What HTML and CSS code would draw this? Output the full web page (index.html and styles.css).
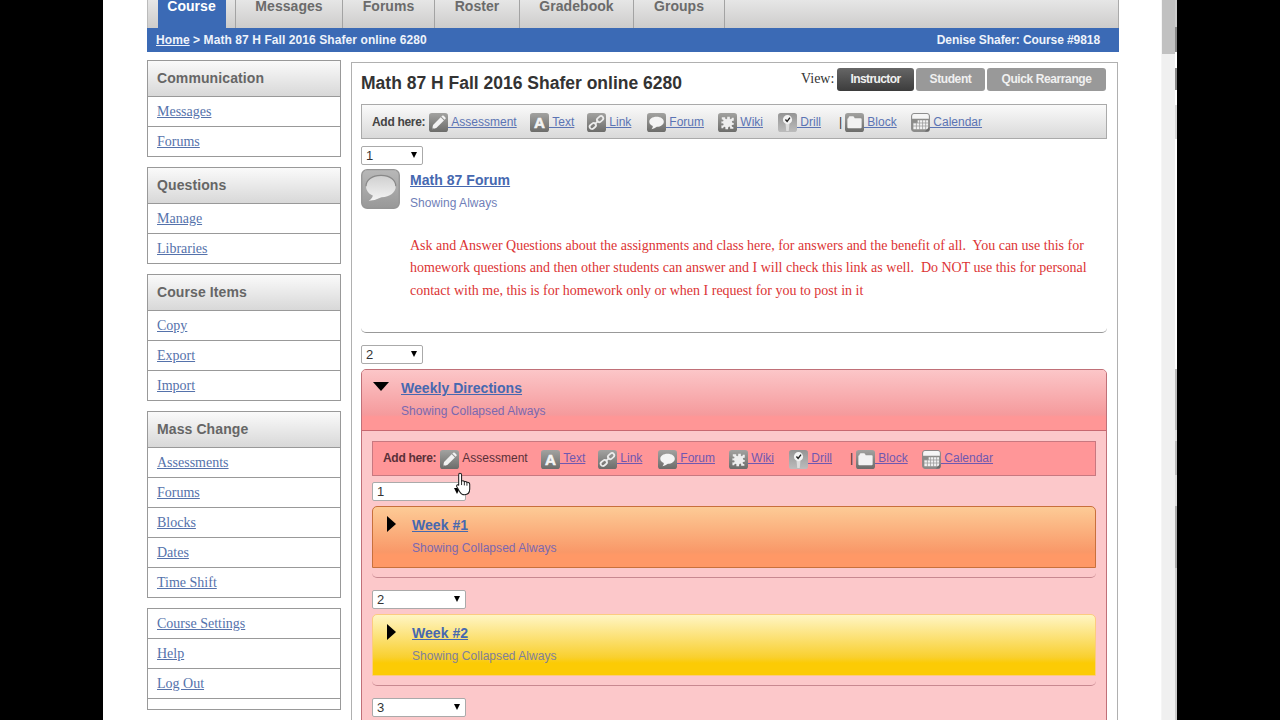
FILE: index.html
```html
<!DOCTYPE html>
<html lang="en">

<head>
    <meta charset="UTF-8">
    <title>Math 87 H Fall 2016 Shafer online 6280</title>
    <link rel="stylesheet" href="styles.css">
</head>

<body>

<svg class="sprite" width="0" height="0">
    <defs>
        <linearGradient id="grey" x1="0" y1="0" x2="0" y2="1">
            <stop offset="0" stop-color="#a2a2a0"/>
            <stop offset="1" stop-color="#6c6c6a"/>
        </linearGradient>
        <linearGradient id="pale" x1="0" y1="0" x2="0" y2="1">
            <stop offset="0" stop-color="#949494"/>
            <stop offset="1" stop-color="#bcbcbc"/>
        </linearGradient>
    </defs>
    <symbol id="i-assess" viewBox="0 0 20 20">
        <rect width="20" height="20" rx="3" fill="url(#grey)"/>
        <path d="M3.200 17l1.100-4.500 8-8 3.400 3.400-8 8z" fill="#f2f2f2"/>
        <path d="M13 3.800l.9-.9q.8-.7 1.600 0l1.800 1.800q.7.800 0 1.600l-.9.900z" fill="#f2f2f2"/>
        <path d="M3.200 17l.5-2 1.500 1.500z" fill="#888"/>
    </symbol>
    <symbol id="i-link" viewBox="0 0 20 20">
        <rect width="20" height="20" rx="3" fill="url(#grey)"/>
        <g fill="none" stroke="#ececec" stroke-width="1.800">
            <rect x="10.200" y="4" width="7.200" height="4.800" rx="2.400" transform="rotate(-40 13.800 6.400)"/>
            <rect x="2.500" y="11.300" width="7.200" height="4.800" rx="2.400" transform="rotate(-40 6.100 13.700)"/>
            <path d="M8 12l4-4"/>
        </g>
    </symbol>
    <symbol id="i-forum" viewBox="0 0 20 20">
        <rect width="20" height="20" rx="3" fill="url(#grey)"/>
        <path d="M10 4c4.700 0 7.700 2.300 7.700 5.300S14.500 14.600 10.400 14.600Q8 16.800 4.800 17q1.500-1.500 1.300-3.200C3.900 13 2.400 11.400 2.400 9.300 2.400 6.300 5.500 4 10 4z" fill="#f4f4f4"/>
    </symbol>
    <symbol id="i-wiki" viewBox="0 0 20 20">
        <rect width="20" height="20" rx="3" fill="url(#grey)"/>
        <path d="M4 4.500h3.500q-.3 2 1.200 2t1-2.500h2.800q-.5 2.500.8 2.500t1.300-1.500h2v3.200q-2-.4-2 1t2 1.300v1.800q-2.300-.2-2.300 1.200t1.900 1.500v1.500h-3.400q.4-2.200-1-2.200T10.500 17H7.800q.4-2.400-.9-2.400T5.500 16H3.600v-3q2.300.4 2.300-1t-2.300-1V8.800q2.200.3 2.200-.9T4 6.900z" fill="#eee"/>
    </symbol>
    <symbol id="i-drill" viewBox="0 0 20 20">
        <rect width="20" height="20" rx="3" fill="url(#pale)"/>
        <path d="M7.900 11h4.200l-.8 8h-2.600z" fill="#dcdcdc"/>
        <circle cx="10" cy="7" r="4.800" fill="#f4f4f4"/>
        <path d="M7.800 6.800l1.800 2 3-4" fill="none" stroke="#222" stroke-width="1.500"/>
    </symbol>
    <symbol id="i-block" viewBox="0 0 20 20">
        <rect width="20" height="20" rx="3" fill="url(#grey)"/>
        <path d="M2.500 6.500q0-1 1-1l.6-1.500q.2-.5.8-.5h3.600q.6 0 .9.500l.8 1.500h6.300q1 0 1 1v8.500q0 1-1 1h-13q-1 0-1-1z" fill="#f2f2f2"/>
    </symbol>
    <symbol id="i-cal" viewBox="0 0 20 20">
        <rect x=".6" y=".6" width="18.800" height="18.800" rx="2.500" fill="#8c8c8a" stroke="#888" stroke-width="1"/>
        <path d="M1.200 6V3q0-1.900 1.900-1.900h13.800q1.900 0 1.900 1.900v3z" fill="#f6f6f6"/>
        <path d="M7 7.500h11V17H2.500V10.500H7z" fill="#f2f2f2"/>
        <path d="M2 10.500h16M2 13.700h16M5.700 10v8M9 7v11M12.200 7v11M15.400 7v11" stroke="#999" stroke-width=".8"/>
        <path d="M14.500 19.500l5-5v3q0 2-2 2z" fill="#6d6d6d"/>
    </symbol>
</svg>

<div class="window">
    <div class="page">

        <ul class="tabs">
            <li class="tab-course"><a class="current">Course</a></li>
            <li class="tab-messages"><a>Messages</a></li>
            <li class="tab-forums"><a>Forums</a></li>
            <li class="tab-roster"><a>Roster</a></li>
            <li class="tab-gradebook"><a>Gradebook</a></li>
            <li class="tab-groups"><a>Groups</a></li>
        </ul>

        <div class="breadcrumb">
            <span><u>Home</u> &gt; Math 87 H Fall 2016 Shafer online 6280</span>
            <span class="who">Denise Shafer: Course #9818</span>
        </div>

        <div class="columns">
            <aside>
                <div class="box">
                    <h3>Communication</h3>
                    <p><a>Messages</a></p>
                    <p><a>Forums</a></p>
                </div>
                <div class="box">
                    <h3>Questions</h3>
                    <p><a>Manage</a></p>
                    <p><a>Libraries</a></p>
                </div>
                <div class="box">
                    <h3>Course Items</h3>
                    <p><a>Copy</a></p>
                    <p><a>Export</a></p>
                    <p><a>Import</a></p>
                </div>
                <div class="box">
                    <h3>Mass Change</h3>
                    <p><a>Assessments</a></p>
                    <p><a>Forums</a></p>
                    <p><a>Blocks</a></p>
                    <p><a>Dates</a></p>
                    <p><a>Time Shift</a></p>
                </div>
                <div class="box">
                    <p><a>Course Settings</a></p>
                    <p><a>Help</a></p>
                    <p><a>Log Out</a></p>
                    <p class="empty"></p>
                </div>
            </aside>

            <main>
                <div class="heading">
                    <h2>Math 87 H Fall 2016 Shafer online 6280</h2>
                    <div class="view">
                        <span class="label">View:</span>
                        <span class="btn on btn-instructor">Instructor</span>
                        <span class="btn btn-student">Student</span>
                        <span class="btn btn-rearrange">Quick Rearrange</span>
                    </div>
                </div>

                <div class="addbar">
                    <b>Add here:</b>
                    <a><svg><use href="#i-assess"/></svg><span>&nbsp;Assessment</span></a>
                    <a><svg viewBox="0 0 20 20"><rect width="20" height="20" rx="3" fill="url(#grey)"/><text x="10" y="15.500" text-anchor="middle" class="letter">A</text></svg><span>&nbsp;Text</span></a>
                    <a><svg><use href="#i-link"/></svg><span>&nbsp;Link</span></a>
                    <a><svg><use href="#i-forum"/></svg><span>&nbsp;Forum</span></a>
                    <a><svg><use href="#i-wiki"/></svg><span>&nbsp;Wiki</span></a>
                    <a><svg><use href="#i-drill"/></svg><span>&nbsp;Drill</span></a>
                    <i>|</i>
                    <a><svg><use href="#i-block"/></svg><span>&nbsp;Block</span></a>
                    <a><svg><use href="#i-cal"/></svg><span>&nbsp;Calendar</span></a>
                </div>

                <div class="select">1</div>

                <div class="item">
                    <svg class="forum-icon" viewBox="0 0 39 40">
                        <defs>
                            <linearGradient id="tile" x1="0" y1="0" x2="0" y2="1">
                                <stop offset="0" stop-color="#b8b8b8"/>
                                <stop offset="1" stop-color="#989898"/>
                            </linearGradient>
                            <linearGradient id="bubble" x1="0" y1="0" x2="0" y2="1">
                                <stop offset="0" stop-color="#cfcfcf"/>
                                <stop offset="1" stop-color="#f4f4f4"/>
                            </linearGradient>
                        </defs>
                        <rect x=".7" y=".7" width="37.600" height="38.600" rx="5.500" fill="url(#tile)" stroke="#959595" stroke-width="1.300"/>
                        <path d="M20 6.500c9 0 14.800 4.700 14.800 10.700S29 28 20.500 28.200Q15 31.200 7.500 31.800q4-2.200 4.300-5.300C7.700 24.700 5 21.500 5 17.200 5 11.200 11 6.500 20 6.500z" fill="url(#bubble)"/>
                        <path d="M5 17.200C5 11 11 6.300 20 6.300s14.800 4.700 14.800 10.900" fill="none" stroke="#888" stroke-width="1.200"/>
                    </svg>
                    <div>
                        <a class="title">Math 87 Forum</a>
                        <p class="status">Showing Always</p>
                        <div class="summary">
                            <p>Ask and Answer Questions about the assignments and class here, for answers and the benefit of all.&nbsp; You can use this for</p>
                            <p>homework questions and then other students can answer and I will check this link as well.&nbsp; Do NOT use this for personal</p>
                            <p>contact with me, this is for homework only or when I request for you to post in it</p>
                        </div>
                    </div>
                </div>

                <div class="select second">2</div>

                <div class="weekly">
                    <div class="block-head">
                        <span class="arrow down"></span>
                        <a class="title">Weekly Directions</a>
                        <p class="status">Showing Collapsed Always</p>
                    </div>
                    <div class="block-body">
                        <div class="addbar">
                            <b>Add here:</b>
                            <a class="hover"><svg><use href="#i-assess"/></svg><span>&nbsp;Assessment</span></a>
                            <a><svg viewBox="0 0 20 20"><rect width="20" height="20" rx="3" fill="url(#grey)"/><text x="10" y="15.500" text-anchor="middle" class="letter">A</text></svg><span>&nbsp;Text</span></a>
                            <a><svg><use href="#i-link"/></svg><span>&nbsp;Link</span></a>
                            <a><svg><use href="#i-forum"/></svg><span>&nbsp;Forum</span></a>
                            <a><svg><use href="#i-wiki"/></svg><span>&nbsp;Wiki</span></a>
                            <a><svg><use href="#i-drill"/></svg><span>&nbsp;Drill</span></a>
                            <i>|</i>
                            <a><svg><use href="#i-block"/></svg><span>&nbsp;Block</span></a>
                            <a><svg><use href="#i-cal"/></svg><span>&nbsp;Calendar</span></a>
                        </div>

                        <div class="select wide">1
                            <svg class="pointer" viewBox="0 0 14 22">
                                <path d="M3.600 1q1.600 0 1.600 1.700v5.600q1.700-.9 2.600.5 1.700-.6 2.400.7 2.600-.4 2.600 2v4.200q0 5.300-4.800 5.300-3 0-4.400-2.600L.9 13.800q-.8-1.600.5-2 .7-.2 1.100.6V2.700Q2.500 1 3.600 1z" fill="#fff" stroke="#222" stroke-width="1"/>
                                <path d="M5.200 8v4M7.800 9v3.300M10.200 9.600v3" stroke="#222" stroke-width=".9"/>
                            </svg>
                        </div>
                        <div class="week orange">
                            <span class="arrow right"></span>
                            <a class="title">Week #1</a>
                            <p class="status">Showing Collapsed Always</p>
                        </div>
                        <div class="week-end"></div>

                        <div class="select wide">2</div>
                        <div class="week yellow">
                            <span class="arrow right"></span>
                            <a class="title">Week #2</a>
                            <p class="status">Showing Collapsed Always</p>
                        </div>
                        <div class="week-end"></div>

                        <div class="select wide">3</div>
                    </div>
                </div>
            </main>
        </div>
    </div>

    <div class="scrollbar"><div class="thumb"></div></div>
    <div class="edge"></div>
</div>

</body>
</html>
```
FILE: styles.css
```css
* {
    box-sizing: border-box;
}

body {
    margin: 0;
    height: 720px;
    overflow: hidden;
    background-color: #000;
    font-family: "Liberation Sans", Arial, sans-serif;
    font-size: 12px;
    color: #333;
}

h2, h3, p, ul {
    margin: 0;
    padding: 0;
}

.sprite {
    display: block;
}

.letter {
    font: bold 16px "Liberation Sans", Arial, sans-serif;
    fill: #f4f4f4;
    stroke: #f4f4f4;
    stroke-width: .6px;
}

.window {
    display: flex;
    width: 1074px;
    height: 720px;
    margin-left: 103px;
    background-color: #fff;
    overflow: hidden;
}

.page {
    width: 972px;
    margin-left: 44px;
    margin-right: 42px;
    flex: none;
}

.scrollbar {
    width: 14px;
    background-color: #f0f0f0;
    border-left: 1px solid #f5f5f5;
}

.thumb {
    height: 54px;
    background-color: #c1c1c1;
}

.edge {
    width: 2px;
    background: linear-gradient(#ccc 0 27px, #888 27px 52px, #fff 52px 68px, #888 68px 90px, #fff 90px 105px, #d8d8d8 105px 139px, #fff 139px 369px, #bbb 369px 430px, #ddd 430px 441px, #bbb 441px 475px, #ddd 475px 506px, #aaa 506px 568px, #ccc 568px);
}

/* top navigation */
.tabs {
    display: flex;
    height: 28px;
    list-style: none;
    background: linear-gradient(#e6e6e6, #cdcccb);
    border-left: 1px solid #bbb;
    border-right: 1px solid #aaa;
}

.tabs li {
    display: flex;
    justify-content: center;
    border-right: 1px solid #a3a3a3;
}

.tabs a {
    height: 28px;
    font-size: 14px;
    font-weight: bold;
    line-height: 12px;
    letter-spacing: .05px;
    color: #6b6b6b;
}

.tabs .current {
    width: 68px;
    text-align: center;
    color: #fff;
    background-color: #3b6ab5;
}

.tab-course { width: 88px; }
.tab-messages { width: 107px; }
.tab-forums { width: 92px; }
.tab-roster { width: 85px; }
.tab-gradebook { width: 114px; }
.tab-groups { width: 91px; }

.breadcrumb {
    display: flex;
    justify-content: space-between;
    height: 24px;
    padding: 0 19px 0 9px;
    line-height: 24px;
    font-weight: bold;
    letter-spacing: .08px;
    color: #eef3fb;
    background-color: #3b6ab5;
}

.who {
    letter-spacing: -.08px;
}

.columns {
    display: flex;
    gap: 10px;
}

/* sidebar */
aside {
    width: 194px;
    padding-top: 8px;
}

.box {
    border: 1px solid #999;
    border-bottom: 0;
    margin-bottom: 10px;
}

.box h3 {
    height: 36px;
    padding-left: 9px;
    line-height: 35px;
    font-size: 14px;
    letter-spacing: .1px;
    color: #666;
    background: linear-gradient(#fafafa, #d8d8d8);
    border-bottom: 1px solid #999;
}

.box p {
    height: 30px;
    padding-left: 9px;
    line-height: 30px;
    font-family: "Liberation Serif", "Times New Roman", serif;
    font-size: 14px;
    border-bottom: 1px solid #999;
}

.box .empty {
    height: 11px;
}

.box a {
    color: #5572ab;
    text-decoration: underline;
}

/* main column */
main {
    width: 767px;
    height: 700px;
    margin-top: 10px;
    padding: 0 10px 0 9px;
    border: 1px solid #b0b0b0;
}

.heading {
    display: flex;
    justify-content: space-between;
    height: 41px;
}

.heading h2 {
    font-size: 17.5px;
    line-height: 40px;
    color: #333;
}

.view {
    display: flex;
    gap: 2px;
    margin-right: 1px;
    padding-top: 5px;
}

.view .label {
    width: 34px;
    font-family: "Liberation Serif", "Times New Roman", serif;
    font-size: 14px;
    line-height: 22px;
}

.btn {
    height: 23px;
    line-height: 22px;
    text-align: center;
    font-weight: bold;
    letter-spacing: -.4px;
    color: #f0f0f0;
    background-color: #999;
    border-radius: 3px;
}

.btn.on {
    background: linear-gradient(#666, #3c3c3c);
}

.btn-instructor {
    width: 77px;
    letter-spacing: -.6px;
}

.btn-student { width: 69px; }
.btn-rearrange { width: 119px; }

.addbar {
    display: grid;
    grid-template-columns: 57px 101px 57px 60px 71px 60px 61px 6px 66px 80px;
    align-items: center;
    height: 35px;
    padding-left: 10px;
    background: linear-gradient(#fafafa, #d9d9d9);
    border: 1px solid #aaa;
}

.addbar b {
    letter-spacing: -.3px;
    color: #444;
}

.addbar i {
    font-style: normal;
}

.addbar a {
    display: flex;
    align-items: center;
    color: #5b74b4;
}

.addbar svg {
    width: 19px;
    height: 19px;
    margin-top: 2px;
    flex: none;
}

.addbar span {
    text-decoration: underline;
}

.select {
    position: relative;
    width: 62px;
    height: 19px;
    margin-top: 7px;
    padding-left: 4px;
    line-height: 18px;
    font-size: 13px;
    color: #333;
    background-color: #fff;
    border: 1px solid #aaa;
    border-radius: 2px;
}

.select::after {
    content: "";
    position: absolute;
    right: 5px;
    top: 5px;
    border: 3px solid transparent;
    border-top: 6px solid #000;
    border-bottom: 0;
}

.select.wide {
    width: 94px;
}

.item {
    display: flex;
    gap: 10px;
    height: 164px;
    margin-top: 4px;
    border-bottom: 1px solid #999;
    border-radius: 0 0 5px 5px;
}

.forum-icon {
    width: 39px;
    height: 40px;
}

.title {
    display: block;
    line-height: 23px;
    font-size: 14px;
    font-weight: bold;
    letter-spacing: .04px;
    color: #4668b0;
    text-decoration: underline;
}

.status {
    line-height: 22px;
    letter-spacing: .05px;
    color: #6f80b8;
}

.summary {
    margin-top: 21px;
    font-family: "Liberation Serif", "Times New Roman", serif;
    font-size: 14px;
    line-height: 22.4px;
    color: #dc3434;
    white-space: nowrap;
}

.second {
    margin-top: 12px;
}

/* weekly blocks */
.weekly {
    height: 400px;
    margin-top: 5px;
    border: 1px solid #c07078;
    border-radius: 5px 5px 0 0;
    background-color: #fcc8ca;
    overflow: hidden;
}

.block-head {
    position: relative;
    height: 61px;
    padding: 7px 0 0 39px;
    background: linear-gradient(#fcc6c8, #f59a9c 75%, #ff9696 78%);
    border-bottom: 1px solid #c86870;
}

.block-body {
    padding: 10px 10px 0 10px;
}

.weekly .status {
    letter-spacing: .05px;
    color: #7b68b0;
}

.weekly .addbar {
    padding-bottom: 1px;
    background: #ff9698;
    border-color: #c87880;
}

.weekly .addbar b, .addbar .hover {
    color: #5a3038;
}

.addbar .hover span {
    text-decoration: none;
}

.weekly .addbar a:not(.hover) {
    color: #7058b0;
}

.block-body .select:nth-child(2) {
    margin-top: 6px;
}

.arrow {
    position: absolute;
}

.arrow.down {
    left: 11px;
    top: 12px;
    border: 8px solid transparent;
    border-top: 9px solid #000;
    border-bottom: 0;
}

.arrow.right {
    left: 14px;
    top: 9px;
    border: 8px solid transparent;
    border-left: 9px solid #000;
    border-right: 0;
}

.week {
    position: relative;
    height: 62px;
    margin-top: 5px;
    padding: 7px 0 0 39px;
    border-radius: 5px 5px 0 0;
}

.orange {
    background: linear-gradient(#fdcb96, #f99868 75%, #ff9866 80%);
    border: 1px solid #c8703c;
}

.yellow {
    background: linear-gradient(#fff5c4, #f9d030 70%, #fccb05 80%);
    border: 1px solid #fccb80;
}

.weekly .yellow .status {
    color: #80809a;
}

.week-end {
    height: 10px;
    margin-bottom: 12px;
    border-bottom: 1px solid #c88890;
    border-radius: 0 0 5px 5px;
}

.pointer {
    position: absolute;
    z-index: 1;
    left: 83px;
    top: -11px;
    width: 15px;
    height: 24px;
}
```
